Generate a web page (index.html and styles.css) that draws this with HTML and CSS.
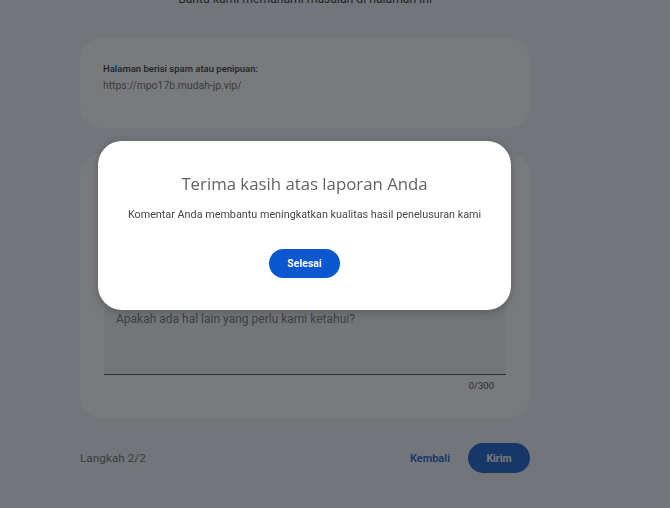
FILE: index.html
```html
<!DOCTYPE html>
<html lang="id">
<head>
<meta charset="utf-8">
<title>Laporan</title>
<link rel="stylesheet" href="styles.css">
</head>
<body>
<main class="page">
  <p class="intro">Bantu kami memahami masalah di halaman ini</p>
  <section class="card card-summary">
    <div class="summary-label">Halaman berisi spam atau penipuan:</div>
    <div class="summary-url">https://mpo17b.mudah-jp.vip/</div>
  </section>
  <section class="card card-form">
    <div class="field">
      <div class="field-box">
        <span class="placeholder">Apakah ada hal lain yang perlu kami ketahui?</span>
      </div>
      <div class="counter">0/300</div>
    </div>
  </section>
  <footer class="footer">
    <span class="step">Langkah 2/2</span>
    <div class="actions">
      <button class="btn-text">Kembali</button>
      <button class="btn-fill">Kirim</button>
    </div>
  </footer>
</main>
<div class="scrim"></div>
<div class="dialog" role="dialog">
  <h2 class="dialog-title">Terima kasih atas laporan Anda</h2>
  <p class="dialog-text">Komentar Anda membantu meningkatkan kualitas hasil penelusuran kami</p>
  <button class="btn-done">Selesai</button>
</div>
</body>
</html>
```
FILE: styles.css
```css
html, body {
  margin: 0;
  padding: 0;
}
body {
  background: #eef3fa;
  font-family: Roboto, "Liberation Sans", Arial, sans-serif;
  width: 670px;
  height: 508px;
  overflow: hidden;
}
.page {
  width: 450px;
  margin-left: 80px;
  display: flex;
  flex-direction: column;
}
.intro {
  margin: -11px 0 0;
  height: 20px;
  line-height: 20px;
  font-size: 12.2px;
  text-align: center;
  color: #1f1f1f;
}
.card {
  background: #ffffff;
  border-radius: 22px;
  box-sizing: border-box;
}
.card-summary {
  margin-top: 29px;
  height: 90px;
  padding: 25px 23px 0;
}
.summary-label {
  font-size: 9.5px;
  font-weight: 500;
  color: #1f1f1f;
  line-height: 12px;
}
.summary-url {
  margin-top: 4px;
  font-size: 10.4px;
  color: #5f6368;
  line-height: 14px;
}
.card-form {
  margin-top: 25px;
  height: 265px;
  padding: 150px 24px 0;
}
.field-box {
  height: 72px;
  background: #f2f3f5;
  border-bottom: 1px solid #3c4043;
  padding: 5px 12px 0;
  box-sizing: border-box;
}
.placeholder {
  font-size: 12px;
  color: #6b6e72;
}
.counter {
  text-align: right;
  font-size: 9.5px;
  color: #3c4043;
  padding: 5px 12px 0 0;
}
.footer {
  margin-top: 25px;
  height: 30px;
  display: flex;
  align-items: center;
  justify-content: space-between;
}
.step {
  font-size: 11.8px;
  color: #5f6368;
}
.actions {
  display: flex;
  align-items: center;
  gap: 18px;
}
.btn-text {
  background: none;
  border: 0;
  padding: 0;
  font-family: inherit;
  font-size: 11px;
  font-weight: 600;
  color: #0b57d0;
}
.btn-fill {
  width: 62px;
  height: 30px;
  border: 0;
  border-radius: 15px;
  background: #0b57d0;
  color: #ffffff;
  font-family: inherit;
  font-size: 10.5px;
  font-weight: 700;
}
.scrim {
  position: fixed;
  inset: 0;
  background: rgba(32, 33, 36, 0.6);
}
.dialog {
  position: fixed;
  left: 98px;
  top: 141px;
  width: 413px;
  height: 169px;
  box-sizing: border-box;
  background: #ffffff;
  border-radius: 24px;
  box-shadow: 0 2px 8px rgba(0, 0, 0, 0.25);
  display: flex;
  flex-direction: column;
  align-items: center;
  padding-top: 32px;
}
.dialog-title {
  margin: 0;
  font-family: "Open Sans", Roboto, sans-serif;
  font-weight: 400;
  font-size: 16.8px;
  line-height: 22px;
  color: #5f6368;
}
.dialog-text {
  margin: 13px 0 0;
  font-size: 10.8px;
  line-height: 14px;
  color: #444746;
}
.btn-done {
  margin-top: 27px;
  width: 71px;
  height: 29px;
  border: 0;
  border-radius: 15px;
  background: #0b57d0;
  color: #ffffff;
  font-family: inherit;
  font-size: 10.5px;
  font-weight: 700;
}
```
